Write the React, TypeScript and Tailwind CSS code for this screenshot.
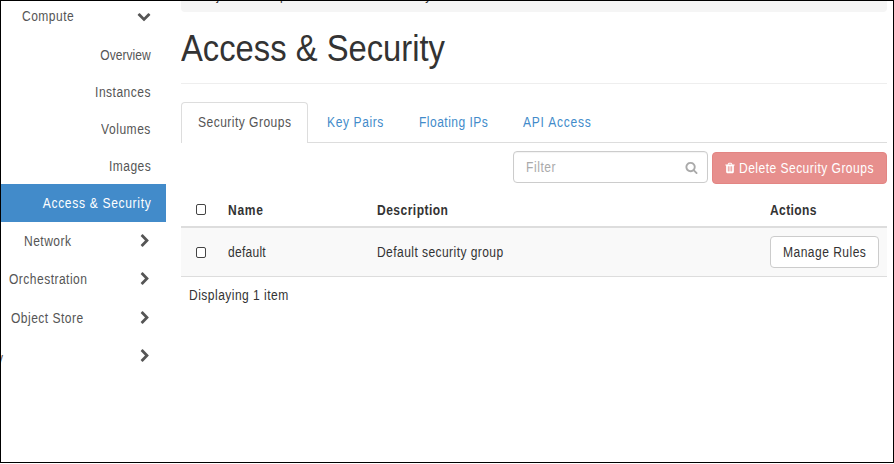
import type { ReactNode } from "react";

const CHEVRON_RIGHT =
  "M1363 877l-742 742q-19 19-45 19t-45-19l-166-166q-19-19-19-45t19-45l531-531-531-531q-19-19-19-45t19-45l166-166q19-19 45-19t45 19l742 742q19 19 19 45t-19 45z";
const CHEVRON_DOWN =
  "M1683 808l-742 741q-19 19-45 19t-45-19l-742-741q-19-19-19-45.500t19-45.500l166-165q19-19 45-19t45 19l531 531 531-531q19-19 45-19t45 19l166 165q19 19 19 45.500t-19 45.500z";
const SEARCH =
  "M1216 832q0-185-131.500-316.500t-316.500-131.500-316.500 131.500-131.500 316.500 131.500 316.500 316.500 131.500 316.500-131.500 131.500-316.500zm512 832q0 52-38 90t-90 38q-54 0-90-38l-343-342q-179 124-399 124-143 0-273.500-55.500t-225-150-150-225-55.500-273.500 55.500-273.500 150-225 225-150 273.500-55.500 273.500 55.500 225 150 150 225 55.500 273.500q0 220-124 399l343 343q37 37 37 90z";
const TRASH =
  "M704 1376v-704q0-14-9-23t-23-9h-64q-14 0-23 9t-9 23v704q0 14 9 23t23 9h64q14 0 23-9t9-23zm256 0v-704q0-14-9-23t-23-9h-64q-14 0-23 9t-9 23v704q0 14 9 23t23 9h64q14 0 23-9t9-23zm256 0v-704q0-14-9-23t-23-9h-64q-14 0-23 9t-9 23v704q0 14 9 23t23 9h64q14 0 23-9t9-23zm-544-992h448l-48-117q-7-9-17-11h-317q-10 2-17 11zm928 32v64q0 14-9 23t-23 9h-96v948q0 83-47 143.500t-113 60.500h-832q-66 0-113-58.500t-47-141.500v-952h-96q-14 0-23-9t-9-23v-64q0-14 9-23t23-9h309l70-167q15-37 54-63t79-26h320q40 0 79 26t54 63l70 167h309q14 0 23 9t9 23z";

function Icon({ d, className }: { d: string; className: string }) {
  return (
    <svg viewBox="0 0 1792 1792" fill="currentColor" className={`shrink-0 ${className}`}>
      <path d={d} />
    </svg>
  );
}

/* Slightly condensed label text; the origin class decides which edge stays put. */
function T({
  children,
  className = "origin-left",
  tracking = "tracking-[0.55px]",
}: {
  children: ReactNode;
  className?: string;
  tracking?: string;
}) {
  return (
    <span className={`inline-block scale-x-[0.86] whitespace-nowrap ${tracking} ${className}`}>
      {children}
    </span>
  );
}

const panels = [
  { label: "Network", row: "h-[38px] pl-[23px]" },
  { label: "Orchestration", row: "h-[38px] pl-[8px]" },
  { label: "Object Store", row: "h-[39px] pl-[10px]" },
];

const links = [
  { label: "Overview", tracking: "tracking-[0.05px]" },
  { label: "Instances", tracking: "tracking-[0.55px]" },
  { label: "Volumes", tracking: "tracking-[0.6px]" },
  { label: "Images", tracking: "tracking-[0.55px]" },
];

function Sidebar() {
  return (
    <nav className="w-[165px] shrink-0 text-[#555]">
      <div className="mb-[6px] flex h-[30px] items-center justify-between pr-[15px] pl-[21px]">
        <T>Compute</T>
        <Icon d={CHEVRON_DOWN} className="-mt-px size-[14px]" />
      </div>
      {links.map((l) => (
        <div key={l.label} className="flex h-[37px] items-center justify-end pr-[15px] pb-px">
          <T className="origin-right" tracking={l.tracking}>{l.label}</T>
        </div>
      ))}
      <div className="-mt-px flex h-[38px] items-center justify-end bg-[#428bca] pr-[15px] text-white shadow-[-1px_0_0_#c77c31]">
        <T className="origin-right" tracking="tracking-[0.8px]">Access &amp; Security</T>
      </div>
      {panels.map((p) => (
        <div key={p.label} className={`flex items-center justify-between pr-[14px] ${p.row}`}>
          <T>{p.label}</T>
          <Icon d={CHEVRON_RIGHT} className="size-[14px]" />
        </div>
      ))}
      <div className="flex h-[38px] items-center justify-between pr-[14px]">
        <T className="mt-[4px] -ml-[4px] origin-left">y</T>
        <Icon d={CHEVRON_RIGHT} className="size-[14px]" />
      </div>
    </nav>
  );
}

function Checkbox() {
  return <span className="block h-[11px] w-[10px] rounded-[2px] border border-[#444] bg-white" />;
}

const columns = "grid grid-cols-[47px_149px_393px_1fr] items-center";

export default function App() {
  return (
    <div className="h-[464px] w-[894px] overflow-hidden bg-white font-['Liberation_Sans',Arial,sans-serif] text-[14px] leading-[20px] text-[#333]">
      <div className="flex h-[463px] overflow-hidden border border-black">
        <Sidebar />
        <main className="ml-[15px] w-[706px] shrink-0">
          <div className="flex h-[11px] items-end overflow-hidden rounded-b-[4px] bg-[#f5f5f5] pl-[14px]">
            <div className="h-[27px]">
              <T tracking="tracking-[1.08px]">Project / Compute / Access &amp; Security</T>
            </div>
          </div>
          <div className="flex h-[72px] items-center border-b border-[#eee] pt-[3px]">
            <h1 className="origin-left scale-x-[0.91] text-[36px] leading-[40px] whitespace-nowrap">
              Access &amp; Security
            </h1>
          </div>
          <div className="mt-[18px] flex h-[41px] border-b border-[#ddd] text-[#428bca]">
            <div className="flex h-[41px] w-[127px] items-center rounded-t-[4px] border border-b-0 border-[#ddd] bg-white pb-[2px] pl-[16px] text-[#555]">
              <T>Security Groups</T>
            </div>
            <div className="flex w-[92px] items-center pl-[19px]"><T tracking="tracking-[0.7px]">Key Pairs</T></div>
            <div className="flex w-[104px] items-center pl-[19px]"><T>Floating IPs</T></div>
            <div className="flex items-center pl-[19px]"><T tracking="tracking-[0.9px]">API Access</T></div>
          </div>
          <div className="flex h-[50px] justify-end pt-[8px]">
            <div className="flex h-[32px] w-[195px] items-center justify-between rounded-[4px] border border-[#ccc] pr-[9px] pl-[12px] text-[#aaa] shadow-[inset_0_1px_1px_rgba(0,0,0,0.05)]">
              <T tracking="tracking-[0.65px]">Filter</T>
              <Icon d={SEARCH} className="size-[13px]" />
            </div>
            <div className="mt-px ml-[4px] flex h-[32px] w-[175px] items-center rounded-[4px] border border-[#e38583] bg-[#e78f8d] pl-[11px] text-white">
              <Icon d={TRASH} className="size-[12px]" />
              <T className="ml-[3px] origin-left">Delete Security Groups</T>
            </div>
          </div>
          <div className={`h-[35px] border-b-2 border-[#ddd] font-bold ${columns}`}>
            <div className="pl-[15px]"><Checkbox /></div>
            <T tracking="tracking-[0.85px]">Name</T>
            <T>Description</T>
            <T tracking="tracking-[0.45px]">Actions</T>
          </div>
          <div className={`h-[49px] border-b border-[#ddd] bg-[#f9f9f9] ${columns}`}>
            <div className="pl-[15px]"><Checkbox /></div>
            <T tracking="tracking-[0.3px]">default</T>
            <T tracking="tracking-[0.5px]">Default security group</T>
            <button className="flex h-[32px] w-[109px] items-center rounded-[4px] border border-[#ccc] bg-white pl-[12px]">
              <T>Manage Rules</T>
            </button>
          </div>
          <div className="flex h-[36px] items-center pl-[8px]">
            <T>Displaying 1 item</T>
          </div>
        </main>
      </div>
    </div>
  );
}
